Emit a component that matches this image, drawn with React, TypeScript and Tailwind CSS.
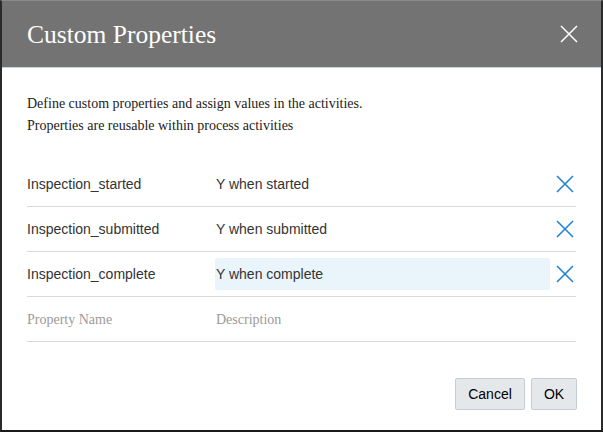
import React from "react";

const rows = [
  { name: "Inspection_started", desc: "Y when started", active: false },
  { name: "Inspection_submitted", desc: "Y when submitted", active: false },
  { name: "Inspection_complete", desc: "Y when complete", active: true },
];

function BlueX() {
  return (
    <svg width="18" height="18" viewBox="0 0 18 18" className="shrink-0">
      <path d="M1 1 L17 17 M17 1 L1 17" stroke="#1f84d6" strokeWidth="1.6" fill="none" />
    </svg>
  );
}

export default function App() {
  return (
    <div className="w-[603px] h-[432px] bg-white border-l-2 border-r-2 border-b-2 border-t border-l-[#2a2a2a] border-r-[#2a2a2a] border-b-[#1a1a1a] border-t-[#8a8a8a] flex flex-col overflow-hidden">
      <div className="h-[67px] bg-[#737373] flex items-center justify-between pl-[25px] pr-[23px] border-b border-[#c6d4e0] shrink-0">
        <div className="text-white text-[25.5px] leading-none pt-[1px]" style={{ fontFamily: '"Liberation Serif", serif' }}>
          Custom Properties
        </div>
        <svg width="18" height="18" viewBox="0 0 18 18">
          <path d="M1 1 L17 17 M17 1 L1 17" stroke="#ffffff" strokeWidth="1.5" fill="none" />
        </svg>
      </div>
      <div className="flex-1 flex flex-col px-[25px]">
        <div
          className="pt-[25px] text-[14px] leading-[22px] text-[#222]"
          style={{ fontFamily: '"Liberation Serif", serif' }}
        >
          <div>Define custom properties and assign values in the activities.</div>
          <div>Properties are reusable within process activities</div>
        </div>
        <div className="mt-[25px] flex flex-col" style={{ fontFamily: '"Liberation Sans", Arial, sans-serif' }}>
          {rows.map((r) => (
            <div key={r.name} className="h-[45px] flex items-center border-b border-[#d9d9d9] text-[14px] text-[#333]">
              <div className="w-[188px] shrink-0">{r.name}</div>
              <div
                className={
                  r.active
                    ? "w-[335px] h-[32px] flex items-center bg-[#eaf4fb] rounded-[2px] pl-[1px]"
                    : "w-[335px] h-[32px] flex items-center pl-[1px]"
                }
              >
                {r.desc}
              </div>
              <div className="flex-1 flex justify-end pr-[2px]">
                <BlueX />
              </div>
            </div>
          ))}
          <div
            className="h-[45px] flex items-center border-b border-[#d9d9d9] text-[14px] text-[#9a9a9a]"
            style={{ fontFamily: '"Liberation Serif", serif' }}
          >
            <div className="w-[188px] shrink-0">Property Name</div>
            <div className="pl-[1px]">Description</div>
          </div>
        </div>
        <div className="mt-[36px] flex justify-end gap-[6px] pr-0 -mr-[1px]" style={{ fontFamily: '"Liberation Sans", Arial, sans-serif' }}>
          <button className="w-[70px] h-[32px] bg-[#e5e8eb] border border-[#c5ccd3] rounded-[2px] text-[14px] text-black">
            Cancel
          </button>
          <button className="w-[46px] h-[32px] bg-[#e5e8eb] border border-[#c5ccd3] rounded-[2px] text-[14px] text-black">
            OK
          </button>
        </div>
      </div>
    </div>
  );
}
